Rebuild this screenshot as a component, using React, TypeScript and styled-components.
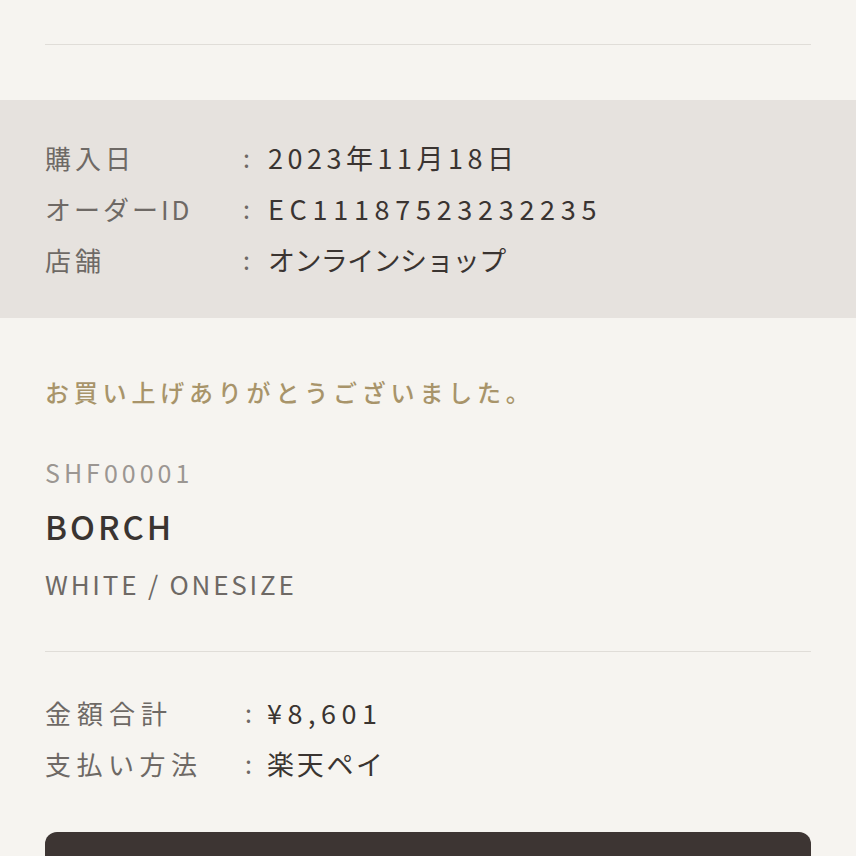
import React from "react";
import styled, { createGlobalStyle } from "styled-components";

const Global = createGlobalStyle`
  html, body { margin: 0; padding: 0; background: #f6f4f0; }
  body { font-family: "Noto Sans CJK JP", "Noto Sans", sans-serif; }
`;

const Page = styled.div`
  width: 856px;
  height: 856px;
  overflow: hidden;
  background: #f6f4f0;
  display: flex;
  flex-direction: column;
`;

const Section = styled.div`
  padding: 0 45px;
`;

const Divider = styled.hr<{ $top: number; $bottom: number }>`
  border: none;
  height: 1px;
  background: #e0ddd8;
  margin: ${(p) => p.$top}px 0 ${(p) => p.$bottom}px;
`;

const Band = styled.div`
  background: #e6e2de;
  padding: 32px 45px 33px;
  display: grid;
  grid-template-columns: 198px 25px auto;
  align-items: center;
`;

const Label = styled.div<{ $ls: number }>`
  font-size: 26px;
  line-height: 51px;
  letter-spacing: ${(p) => p.$ls}px;
  color: #6e6965;
`;

const Colon = styled.div`
  font-size: 25px;
  line-height: 51px;
  color: #6e6965;
`;

const Value = styled.div<{ $ls: number }>`
  font-size: 27px;
  line-height: 51px;
  letter-spacing: ${(p) => p.$ls}px;
  color: #3a3431;
`;

const Thanks = styled.div`
  font-size: 24px;
  letter-spacing: 4.8px;
  color: #a8946a;
  font-weight: 500;
  line-height: 34px;
  margin-top: 57px;
`;

const Code = styled.div`
  font-size: 25px;
  letter-spacing: 4px;
  color: #9b9692;
  line-height: 34px;
  margin-top: 46px;
`;

const Name = styled.div`
  font-size: 33px;
  letter-spacing: 3px;
  color: #3a3431;
  font-weight: 500;
  line-height: 40px;
  margin-top: 17px;
`;

const Variant = styled.div`
  font-size: 26px;
  letter-spacing: 2.8px;
  color: #6e6965;
  line-height: 36px;
  margin-top: 20px;
`;

const Totals = styled.div`
  display: grid;
  grid-template-columns: 200px 22px auto;
  align-items: center;
`;

const Button = styled.div`
  height: 80px;
  background: #3d3533;
  border-radius: 12px;
  margin-top: 43px;
`;

type Row = { label: string; value: string; lls: number; vls: number };

export default function App() {
  const info: Row[] = [
    { label: "購入日", value: "2023年11月18日", lls: 4, vls: 4.5 },
    { label: "オーダーID", value: "EC11187523232235", lls: 3, vls: 5.7 },
    { label: "店舗", value: "オンラインショップ", lls: 4, vls: -0.6 },
  ];
  const totals: Row[] = [
    { label: "金額合計", value: "¥8,601", lls: 6, vls: 5.5 },
    { label: "支払い方法", value: "楽天ペイ", lls: 5.5, vls: 2.7 },
  ];
  return (
    <Page>
      <Global />
      <Section>
        <Divider $top={44} $bottom={55} />
      </Section>
      <Band>
        {info.map((r) => (
          <React.Fragment key={r.label}>
            <Label $ls={r.lls}>{r.label}</Label>
            <Colon>:</Colon>
            <Value $ls={r.vls}>{r.value}</Value>
          </React.Fragment>
        ))}
      </Band>
      <Section>
        <Thanks>お買い上げありがとうございました。</Thanks>
        <Code>SHF00001</Code>
        <Name>BORCH</Name>
        <Variant>WHITE / ONESIZE</Variant>
        <Divider $top={49} $bottom={35} />
        <Totals>
          {totals.map((r) => (
            <React.Fragment key={r.label}>
              <Label $ls={r.lls}>{r.label}</Label>
              <Colon>:</Colon>
              <Value $ls={r.vls}>{r.value}</Value>
            </React.Fragment>
          ))}
        </Totals>
        <Button />
      </Section>
    </Page>
  );
}
